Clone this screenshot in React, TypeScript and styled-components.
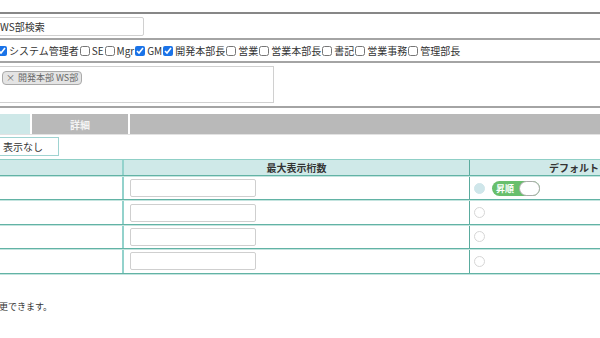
import React from "react";
import styled, { createGlobalStyle } from "styled-components";

const GlobalStyle = createGlobalStyle`
  html, body {
    margin: 0;
    padding: 0;
    background: #fff;
    overflow: hidden;
  }
  body {
    font-family: "Noto Sans CJK JP", "Noto Sans", sans-serif;
    font-size: 10px;
    color: #333;
  }
`;

const Page = styled.div`
  width: 790px;
  margin-left: -70px;
  padding-top: 12px;
`;

const Form = styled.div`
  border-top: 2px solid #878787;
`;

const FormRow = styled.div<{ $h: number }>`
  display: grid;
  grid-template-columns: 67px 1fr;
  height: ${(p) => p.$h}px;
  border-bottom: 2px solid #a4a4a4;
`;

const FormLabel = styled.div`
  display: flex;
  align-items: center;
  padding-left: 6px;
  overflow: hidden;
  white-space: nowrap;
  font-weight: bold;
`;

const FormValue = styled.div<{ $top?: boolean }>`
  display: flex;
  align-items: ${(p) => (p.$top ? "flex-start" : "center")};
  min-width: 0;
  white-space: nowrap;
`;

const SearchInput = styled.input`
  box-sizing: border-box;
  width: 147px;
  height: 19px;
  margin: 0;
  padding: 0 2px;
  border: 1px solid #d0d0d0;
  border-radius: 2px;
  font: inherit;
  font-size: 10px;
  color: #333;
  outline: none;
`;

const CheckLabel = styled.label`
  display: inline-flex;
  align-items: center;
  margin-right: 1px;
`;

const Check = styled.input.attrs({ type: "checkbox" })`
  width: 10px;
  height: 10px;
  margin: 0 2px 0 0;
  accent-color: #1a73e8;
`;

const TagBox = styled.div`
  box-sizing: border-box;
  width: 277px;
  height: 37px;
  margin-top: 3px;
  padding: 2px 4px;
  border: 1px solid #d0d0d0;
`;

const Tag = styled.span`
  display: inline-flex;
  align-items: center;
  gap: 3px;
  box-sizing: border-box;
  height: 14px;
  padding: 0 3px;
  background: #e4e4e4;
  border: 1px solid #aaa;
  border-radius: 4px;
  color: #666;
  font-size: 9px;
`;

const TabBar = styled.div`
  display: flex;
  gap: 2px;
  height: 20px;
  margin-top: 6px;
  border-bottom: 1px solid #e2e2e2;
`;

const Tab = styled.div<{ $active?: boolean; $w?: number }>`
  ${(p) => (p.$w ? `width: ${p.$w}px;` : "flex: 1;")}
  display: flex;
  align-items: center;
  justify-content: center;
  background: ${(p) => (p.$active ? "#cee8e8" : "#b9b9b9")};
  color: ${(p) => (p.$active ? "#4d9fa3" : "#f4f4f4")};
  font-weight: bold;
`;

const FilterRow = styled.div`
  display: flex;
  align-items: center;
  height: 19px;
  margin-top: 2px;
`;

const FilterLabel = styled.div`
  width: 69px;
  overflow: hidden;
  white-space: nowrap;
`;

const SelectBox = styled.div`
  box-sizing: border-box;
  width: 60px;
  height: 19px;
  padding: 0 3px;
  display: flex;
  align-items: center;
  border: 1px solid #9fd3d1;
`;

const Grid = styled.div`
  margin-top: 3px;
  border-top: 1px solid #8fcfc6;
`;

const GridRow = styled.div<{ $head?: boolean }>`
  display: grid;
  grid-template-columns: 194px 346px 238px;
  height: ${(p) => (p.$head ? "15px" : "22.4px")};
  background: ${(p) => (p.$head ? "#cfe9e8" : "transparent")};
  border-bottom: 1px solid #62b3a5;
  box-shadow: 0 1px 0 #c4e4df;
  margin-bottom: 1px;
`;

const Cell = styled.div<{ $line?: "wide" | "thin" }>`
  display: flex;
  align-items: center;
  justify-content: flex-start;
  box-sizing: border-box;
  ${(p) => p.$line === "wide" && "border-right: 2px solid #93d2cc;"}
  ${(p) => p.$line === "thin" && "border-right: 1px solid #5aab9e;"}
`;

const HeadCell = styled(Cell)`
  justify-content: center;
  font-weight: bold;
  color: #333;
`;

const DigitsInput = styled.input`
  box-sizing: border-box;
  width: 126px;
  height: 18px;
  margin: 0 0 0 6px;
  border: 1px solid #cfcfcf;
  border-radius: 2px;
  outline: none;
`;

const Radio = styled.span<{ $on?: boolean }>`
  box-sizing: border-box;
  width: 11px;
  height: 11px;
  margin-left: 4px;
  border-radius: 50%;
  background: ${(p) => (p.$on ? "#cfe6ea" : "#fff")};
  border: 1px solid ${(p) => (p.$on ? "#cfe6ea" : "#d6d6d6")};
`;

const Toggle = styled.span`
  display: inline-flex;
  align-items: center;
  box-sizing: border-box;
  width: 48px;
  height: 15px;
  margin-left: 7px;
  border-radius: 8px;
  background: #68bf6c;
`;

const ToggleText = styled.span`
  flex: 1;
  padding-left: 4px;
  color: #fff;
  font-size: 9px;
  font-weight: bold;
`;

const Knob = styled.span`
  box-sizing: border-box;
  width: 21px;
  height: 15px;
  border-radius: 8px;
  background: #fff;
  border: 1px solid #aaa;
`;

const Note = styled.p`
  margin: 26px 0 0;
  padding-left: 15px;
  font-size: 9px;
  line-height: 13px;
`;

const roles = [
  { name: "システム管理者", on: true },
  { name: "SE", on: false },
  { name: "Mgr", on: false },
  { name: "GM", on: true },
  { name: "開発本部長", on: true },
  { name: "営業", on: false },
  { name: "営業本部長", on: false },
  { name: "書記", on: false },
  { name: "営業事務", on: false },
  { name: "管理部長", on: false },
];

const rows = [0, 1, 2, 3];

export default function App() {
  return (
    <>
      <GlobalStyle />
      <Page>
        <Form>
          <FormRow $h={24}>
            <FormLabel>名称</FormLabel>
            <FormValue>
              <SearchInput defaultValue="WS部検索" />
            </FormValue>
          </FormRow>
          <FormRow $h={21}>
            <FormLabel>役職</FormLabel>
            <FormValue>
              {roles.map((r) => (
                <CheckLabel key={r.name}>
                  <Check defaultChecked={r.on} />
                  {r.name}
                </CheckLabel>
              ))}
            </FormValue>
          </FormRow>
          <FormRow $h={43}>
            <FormLabel>所属</FormLabel>
            <FormValue $top>
              <TagBox>
                <Tag>
                  <span>×</span>
                  <span>開発本部 WS部</span>
                </Tag>
              </TagBox>
            </FormValue>
          </FormRow>
        </Form>

        <TabBar>
          <Tab $active $w={100}>表示設定</Tab>
          <Tab $w={96}>詳細</Tab>
          <Tab />
        </TabBar>

        <FilterRow>
          <FilterLabel>初期表示</FilterLabel>
          <SelectBox>表示なし</SelectBox>
        </FilterRow>

        <Grid>
          <GridRow $head>
            <HeadCell $line="wide" />
            <HeadCell $line="thin">最大表示桁数</HeadCell>
            <HeadCell>デフォルトソート</HeadCell>
          </GridRow>
          {rows.map((i) => (
            <GridRow key={i}>
              <Cell $line="wide" />
              <Cell $line="thin">
                <DigitsInput />
              </Cell>
              <Cell>
                <Radio $on={i === 0} />
                {i === 0 && (
                  <Toggle>
                    <ToggleText>昇順</ToggleText>
                    <Knob />
                  </Toggle>
                )}
              </Cell>
            </GridRow>
          ))}
        </Grid>

        <Note>※表示順は変更できます。</Note>
      </Page>
    </>
  );
}
